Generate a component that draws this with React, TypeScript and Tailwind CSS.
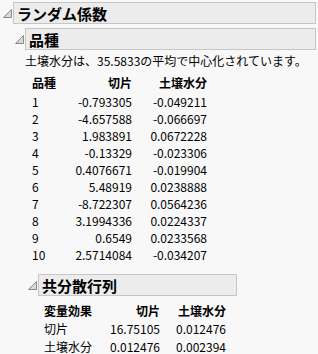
import React from "react";

const font = {
	fontFamily: '"Noto Sans CJK JP", "Noto Sans", sans-serif',
};

const Disclosure = () => (
	<svg width="9" height="9" viewBox="0 0 9 9" className="shrink-0">
		<path d="M8.5 0.5 L8.5 8.5 L0.5 8.5 Z" fill="#d8d8d8" stroke="#8a8a8a" strokeWidth="1" />
	</svg>
);

const Header = ({ title, className = "" }: { title: string; className?: string }) => (
	<div className={`flex items-center ${className}`}>
		<Disclosure />
		<div className="flex-1 h-[22px] ml-[1px] border border-[#c6c6c6] bg-[#ececec] flex items-center pl-[3px] text-[15px] font-bold text-black leading-none">
			{title}
		</div>
	</div>
);

const randomRows = [
	["1", "-0.793305", "-0.049211"],
	["2", "-4.657588", "-0.066697"],
	["3", "1.983891", "0.0672228"],
	["4", "-0.13329", "-0.023306"],
	["5", "0.4076671", "-0.019904"],
	["6", "5.48919", "0.0238888"],
	["7", "-8.722307", "0.0564236"],
	["8", "3.1994336", "0.0224337"],
	["9", "0.6549", "0.0233568"],
	["10", "2.5714084", "-0.034207"],
];

const covRows = [
	["切片", "16.75105", "0.012476"],
	["土壌水分", "0.012476", "0.002394"],
];

export default function App() {
	return (
		<div className="w-[318px] h-[354px] bg-[#f8f8f8] overflow-hidden text-black pt-[2px]" style={font}>
			<Header title="ランダム係数" className="pl-[3px] pr-[2px]" />
			<div className="pl-[15px] pr-[2px] mt-[4px]">
				<Header title="品種" />
			</div>
			<div className="pl-[25px] text-[12px] leading-[17px] mt-[2px] whitespace-nowrap">
				土壌水分は、35.5833の平均で中心化されています。
			</div>
			<div className="ml-[32px] mt-[6px] text-[12px] w-[175px]">
				<div className="grid grid-cols-[40px_60px_75px] h-[18px] leading-[16px] font-bold">
					<span>品種</span>
					<span className="text-right">切片</span>
					<span className="text-right">土壌水分</span>
				</div>
				{randomRows.map((r) => (
					<div key={r[0]} className="grid grid-cols-[40px_60px_75px] h-[17px] leading-[17px]">
						<span>{r[0]}</span>
						<span className="text-right">{r[1]}</span>
						<span className="text-right">{r[2]}</span>
					</div>
				))}
			</div>
			<div className="pl-[28px] w-[237px] mt-[11px]">
				<Header title="共分散行列" />
			</div>
			<div className="ml-[44px] mt-[6px] text-[12px] w-[182px]">
				<div className="grid grid-cols-[58px_58px_66px] h-[18px] leading-[18px] font-bold">
					<span>変量効果</span>
					<span className="text-right">切片</span>
					<span className="text-right">土壌水分</span>
				</div>
				{covRows.map((r) => (
					<div key={r[0]} className="grid grid-cols-[58px_58px_66px] h-[18px] leading-[18px]">
						<span>{r[0]}</span>
						<span className="text-right">{r[1]}</span>
						<span className="text-right">{r[2]}</span>
					</div>
				))}
			</div>
		</div>
	);
}
